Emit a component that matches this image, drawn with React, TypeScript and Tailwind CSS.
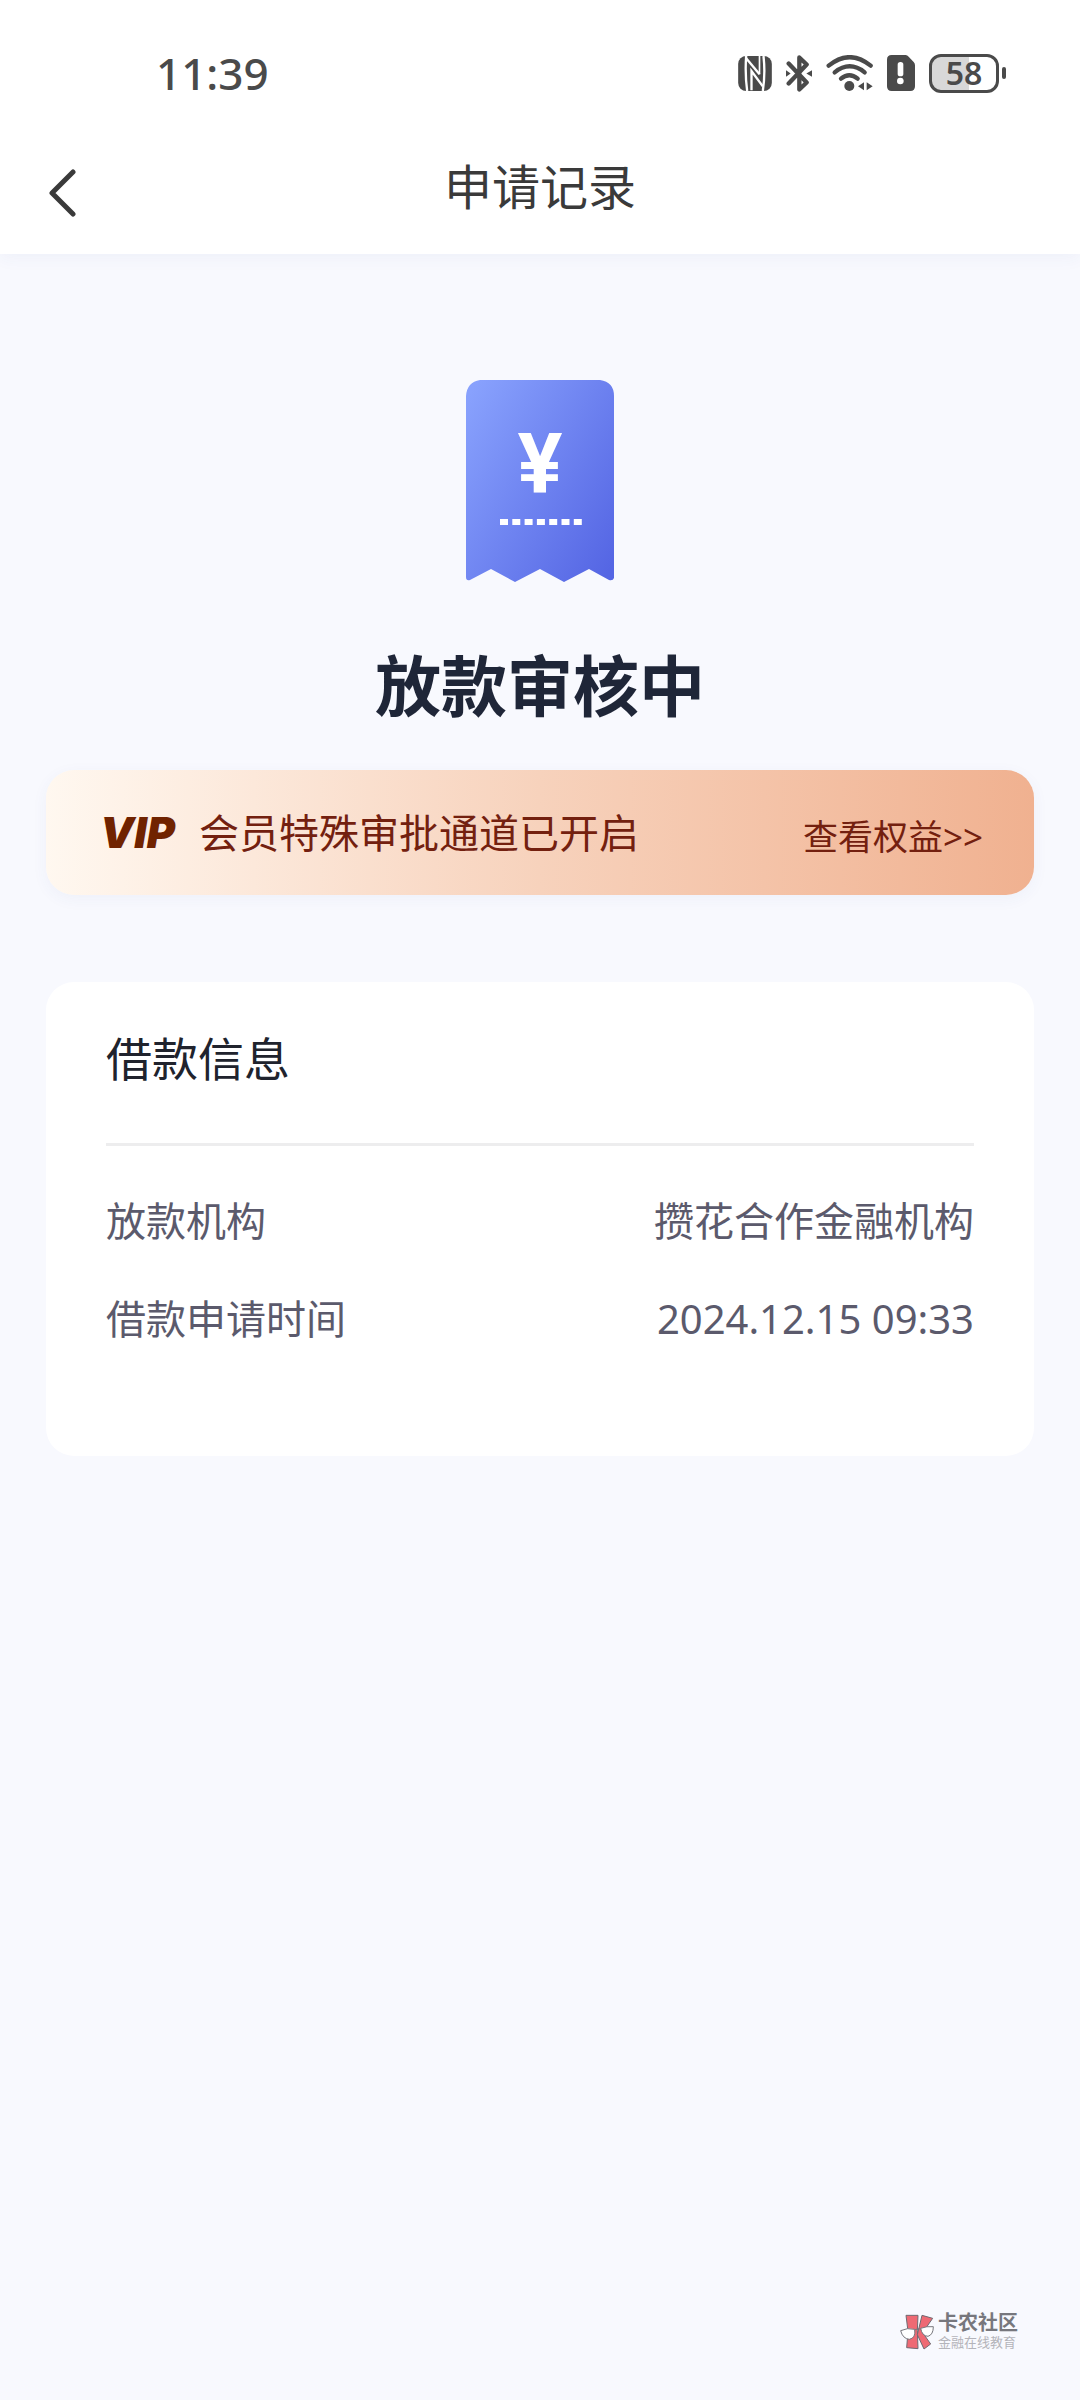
import { Fragment } from "react";

const details = [
  { label: "放款机构", value: "攒花合作金融机构" },
  { label: "借款申请时间", value: "2024.12.15 09:33" },
];

function NfcIcon() {
  return (
    <svg className="h-[35px] w-[34px]" viewBox="55 47 101 105" aria-hidden="true">
      <rect x="55" y="47" width="101" height="105" rx="24" fill="#4a4a4a" />
      <g fill="none" stroke="#fff" strokeWidth="7">
        <path d="M79 47Q75 100 82 152" />
        <path d="M131 47Q137 100 129 152" />
        <path d="M79 54L119 102" />
        <path d="M119 47V102" strokeWidth="5" />
        <path d="M95 150V92L129 138" />
      </g>
    </svg>
  );
}

function BluetoothIcon() {
  return (
    <svg className="h-[37px] w-[26px]" viewBox="197 43 78 110" aria-hidden="true">
      <path
        d="M205 68L259 125L237 146V50L259 71L205 128"
        fill="none"
        stroke="#4a4a4a"
        strokeWidth="13"
        strokeLinecap="round"
        strokeLinejoin="round"
      />
      <path d="M197 88L211 98L197 108ZM275 88L258 98L275 108Z" fill="#4a4a4a" />
    </svg>
  );
}

function WifiIcon() {
  return (
    <svg className="h-9 w-[47px]" viewBox="313 45 139 108" aria-hidden="true">
      <g fill="none" stroke="#4a4a4a" strokeWidth="13" strokeLinecap="round">
        <path d="M320 77Q383 26 446 77" />
        <path d="M338 97Q383 61 428 97" />
        <path d="M357 116Q382 95 407 116" />
      </g>
      <circle cx="382" cy="138" r="15" fill="#4a4a4a" />
      <path d="M408 139L426 127V151ZM434 127L452 139L434 151Z" fill="#4a4a4a" />
    </svg>
  );
}

function SimAlertIcon() {
  return (
    <svg className="h-9 w-7" viewBox="497 45 84 108" aria-hidden="true">
      <path
        d="M511 45H553Q558 45 562 50L577 66Q581 70 581 76V139Q581 153 567 153H511Q497 153 497 139V59Q497 45 511 45Z"
        fill="#4a4a4a"
      />
      <rect x="529" y="66" width="17" height="43" rx="8" fill="#fff" />
      <circle cx="537" cy="123" r="10" fill="#fff" />
    </svg>
  );
}

function Battery() {
  return (
    <div className="flex items-center gap-[3px]">
      <div className="flex h-[39px] w-[70px] items-center justify-center rounded-xl border-[3px] border-[#4a4a4a] bg-linear-to-r from-[#d8d8d8] from-58% to-white to-58% text-[32px] leading-none font-semibold">
        58
      </div>
      <div className="h-3 w-1 rounded-full bg-[#4a4a4a]" />
    </div>
  );
}

function StatusBar() {
  return (
    <div className="flex h-[146px] items-center justify-between pr-[74px] pl-[156px] text-[#4a4a4a]">
      <span className="text-[44px] leading-none font-medium">11:39</span>
      <div className="flex items-center gap-[14px]">
        <NfcIcon />
        <BluetoothIcon />
        <WifiIcon />
        <SimAlertIcon />
        <Battery />
      </div>
    </div>
  );
}

function ReceiptIcon() {
  return (
    <svg className="h-[202px] w-[148px]" viewBox="0 0 148 202" role="img" aria-label="放款单">
      <defs>
        <linearGradient id="receipt" x1="0" y1="0.1" x2="1" y2="0.9">
          <stop offset="0" stopColor="#88a1fd" />
          <stop offset="1" stopColor="#5566e4" />
        </linearGradient>
      </defs>
      <path
        d="M14 0H134Q148 2 148 16V198Q147 201 143 200L123 189L98 202L74 189L49 202L25 189L4 200Q0 201 0 197V16Q1 2 14 0Z"
        fill="url(#receipt)"
      />
      <text
        x="74"
        y="113"
        textAnchor="middle"
        fill="#fff"
        className="font-[Roboto,sans-serif] text-[84px] font-bold"
      >
        ¥
      </text>
      <path d="M34 142H116" stroke="#fff" strokeWidth="6" strokeDasharray="8 4.3" />
    </svg>
  );
}

function CommunityLogo() {
  return (
    <svg className="h-9 w-[34px]" viewBox="0 0 102 108" aria-hidden="true">
      <g fill="#ee6a74" stroke="#6f6a72" strokeWidth="3" strokeLinejoin="round">
        <path d="M18 4L54 4L52 50L54 104L20 101L24 52Z" />
        <path d="M66 4L98 13L68 56L92 90L72 105L52 62Z" />
      </g>
      <g fill="#fff" stroke="#77777d" strokeWidth="3">
        <path d="M2 50Q22 40 44 46Q48 72 28 76Q8 74 2 50Z" />
        <path d="M62 43Q80 36 100 38Q100 62 84 67Q66 66 62 43Z" />
        <path d="M44 48Q53 42 62 45" fill="none" />
      </g>
    </svg>
  );
}

export default function App() {
  return (
    <div className="flex min-h-screen flex-col bg-[#f8f9fe] font-['Noto_Sans','Noto_Sans_CJK_SC',sans-serif]">
      <header className="bg-white shadow-[0_4px_16px_rgba(60,70,160,0.05)]">
        <StatusBar />
        <div className="grid h-[108px] grid-cols-[1fr_auto_1fr] px-[48px] text-[#3a3a3a]">
          <button type="button" aria-label="返回" className="flex h-[94px] w-[60px] items-center">
            <svg className="h-12 w-[30px]" viewBox="0 0 30 48" aria-hidden="true">
              <path
                d="M25 3L4 24L25 45"
                fill="none"
                stroke="currentColor"
                strokeWidth="5"
                strokeLinecap="round"
                strokeLinejoin="round"
              />
            </svg>
          </button>
          <h1 className="text-[48px] leading-[82px]">申请记录</h1>
        </div>
      </header>

      <main className="flex flex-col px-[46px] pt-[126px]">
        <section className="flex flex-col items-center">
          <ReceiptIcon />
          <h2 className="mt-14 text-[66px] leading-[94px] font-bold text-[#1f2638]">放款审核中</h2>
        </section>

        <section className="mt-[38px] flex h-[125px] items-center rounded-[28px] bg-linear-to-r from-[#fff8f0] via-[#f7d2bc] to-[#f0b190] pr-[51px] pl-[54px] text-[#73200f] shadow-[0_4px_16px_rgba(60,70,160,0.05)]">
          <span className="font-[Inter,sans-serif] text-[43px] leading-none font-black text-[#702300] italic">VIP</span>
          <p className="ml-6 text-[40px] leading-none">会员特殊审批通道已开启</p>
          <a href="#benefits" className="ml-auto pt-2 text-[35px] leading-none">
            查看权益&gt;&gt;
          </a>
        </section>

        <section className="mt-[87px] rounded-[28px] bg-white px-[60px] pb-[88px]">
          <h3 className="border-b-3 border-[#ededee] pt-10 pb-[49px] text-[46px] leading-[72px] text-[#20232d]">
            借款信息
          </h3>
          <dl className="mt-[26px] grid grid-cols-[auto_1fr] text-[40px] leading-[98px] text-[#5b5a6c]">
            {details.map((item) => (
              <Fragment key={item.label}>
                <dt>{item.label}</dt>
                <dd className="text-right">{item.value}</dd>
              </Fragment>
            ))}
          </dl>
        </section>
      </main>

      <footer className="mt-auto flex items-center justify-end gap-1 pr-[62px] pb-[50px]">
        <CommunityLogo />
        <div className="flex flex-col gap-px">
          <span className="text-[20px] leading-5 font-bold text-[#77777d]">卡农社区</span>
          <span className="text-[13px] leading-4 text-[#b4b4ba]">金融在线教育</span>
        </div>
      </footer>
    </div>
  );
}
